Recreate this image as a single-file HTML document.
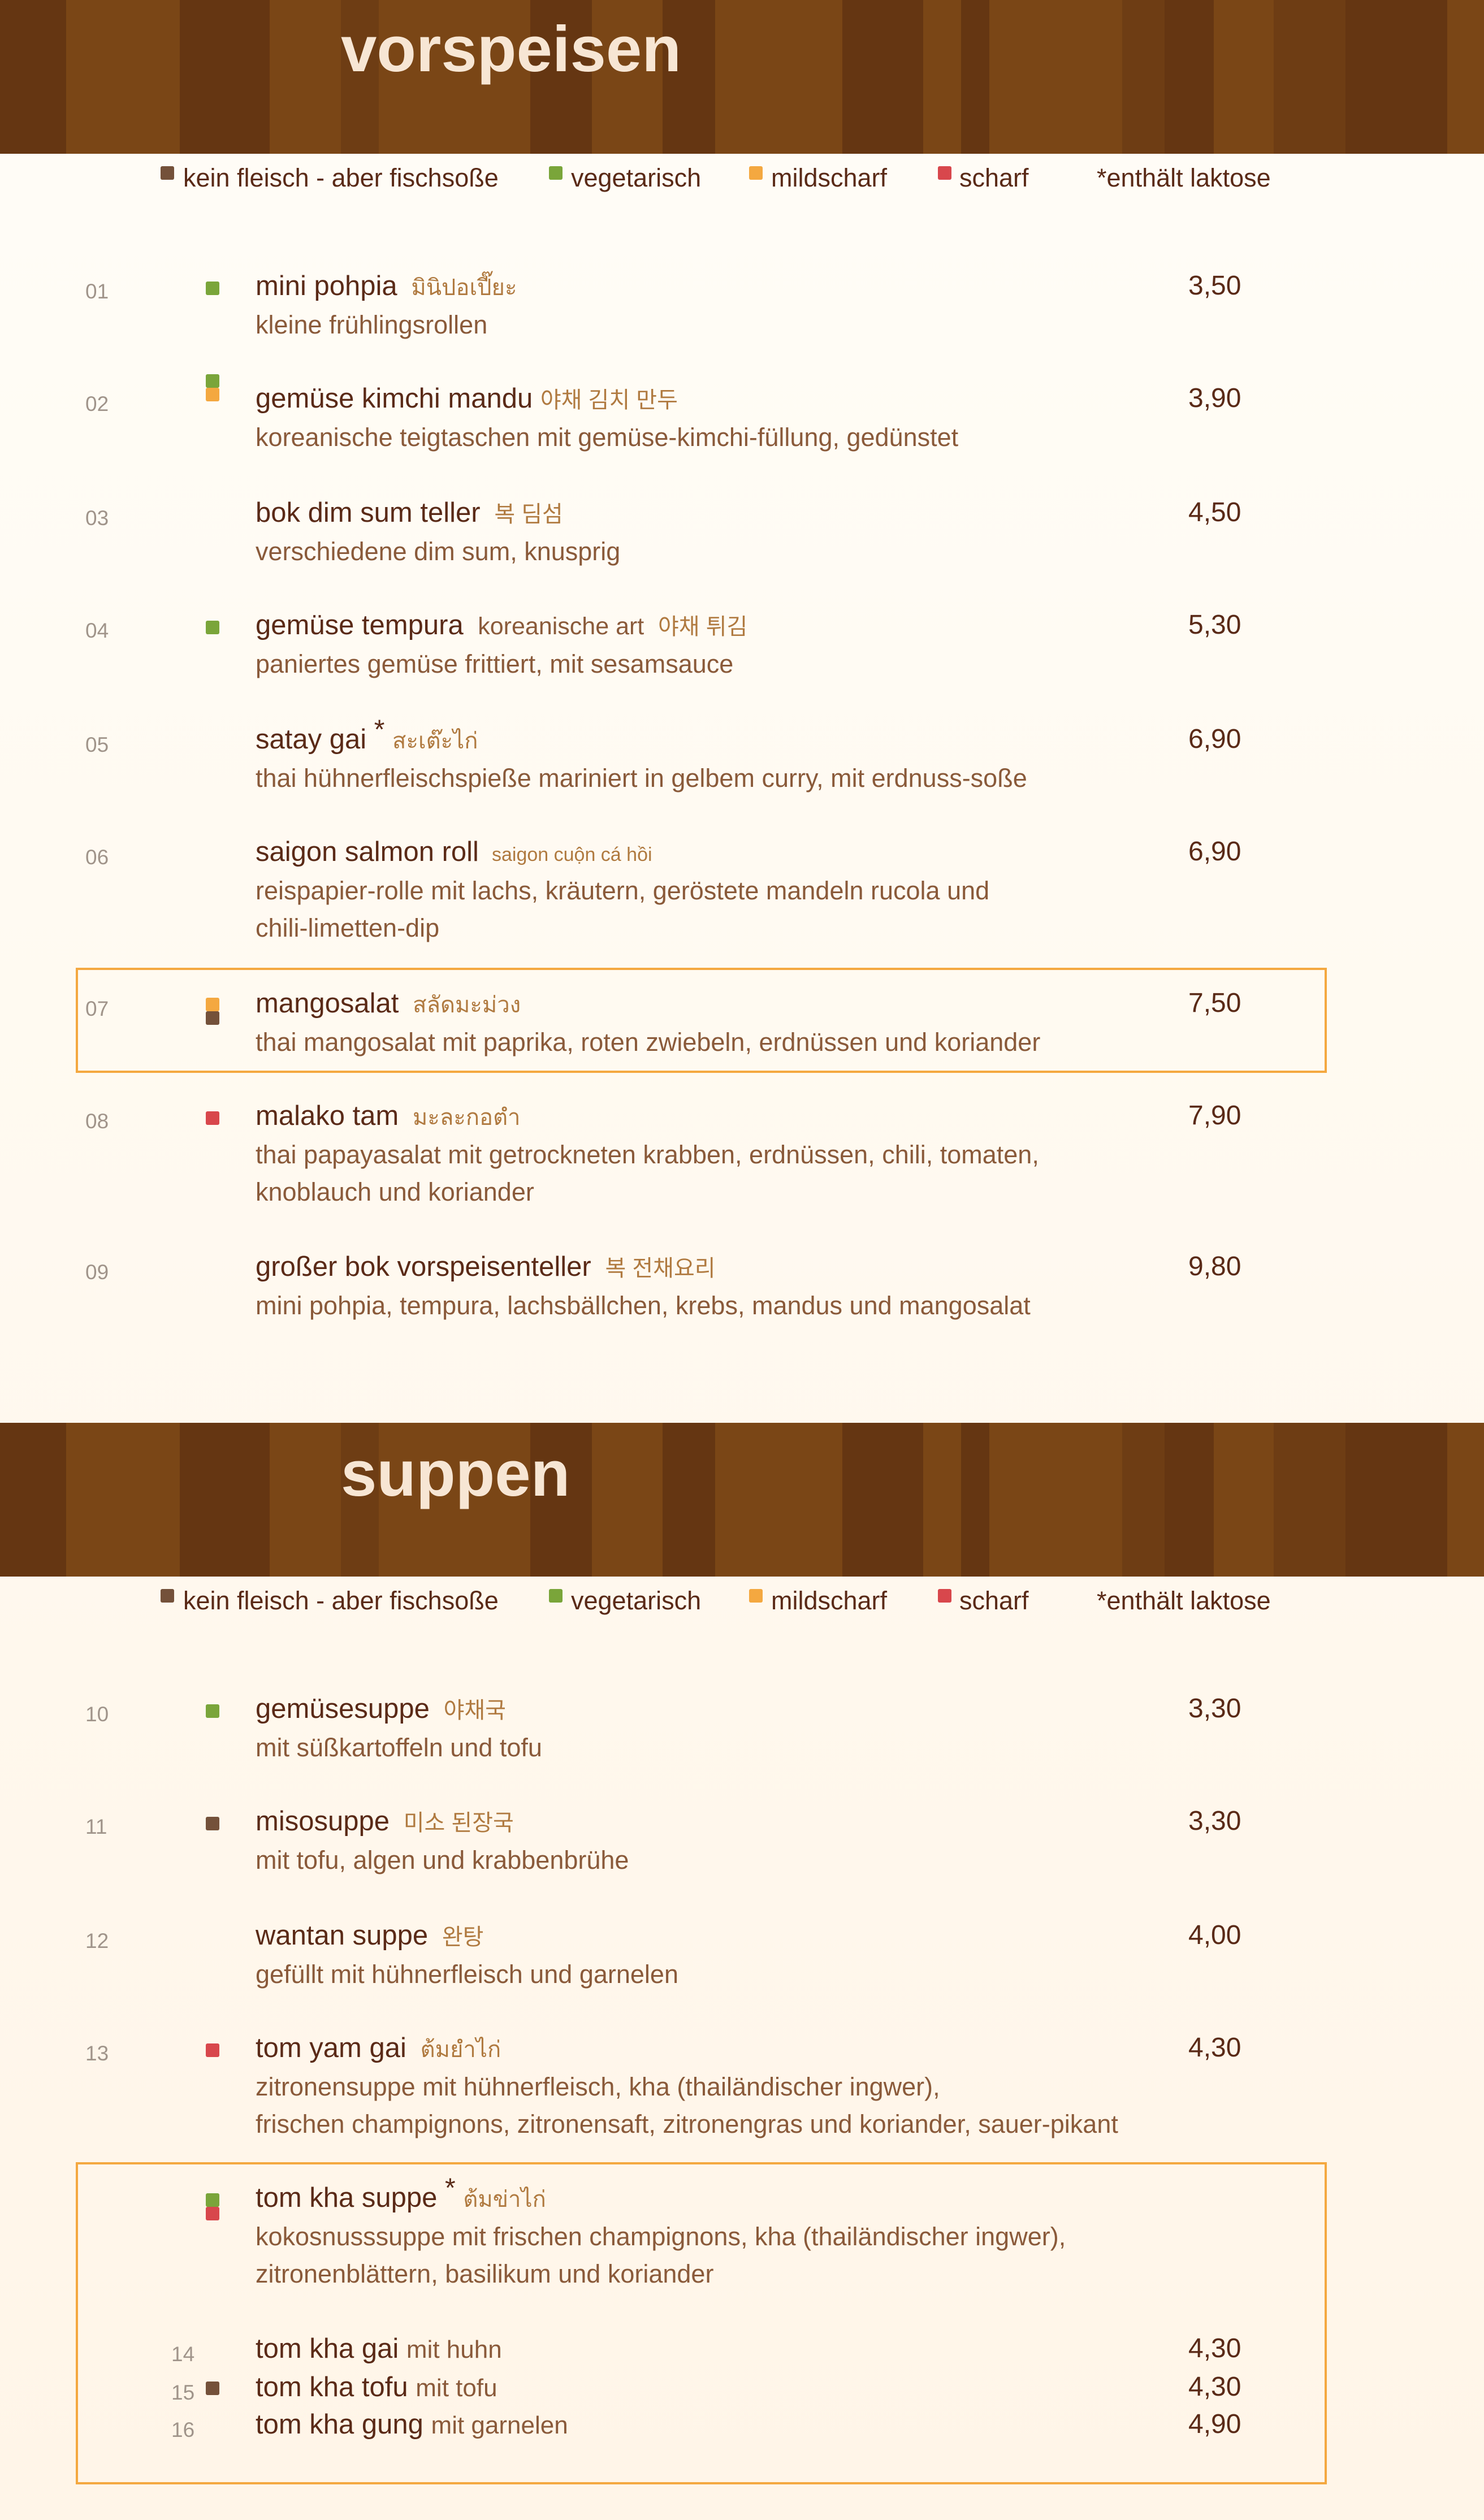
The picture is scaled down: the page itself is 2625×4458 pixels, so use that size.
<!DOCTYPE html>
<html><head><meta charset="utf-8">
<style>
*{margin:0;padding:0;box-sizing:border-box}
body{width:2625px;height:4458px;position:relative;overflow:hidden;font-family:"Liberation Sans","Noto Sans CJK KR",sans-serif;background:linear-gradient(#fffdf7,#fff5e8);}
.band{position:absolute;left:0;width:2625px;height:272px;background:linear-gradient(to right,#653612 0 117px,#7a4616 117px 318px,#653612 318px 477px,#7a4616 477px 603px,#6e3d14 603px 670px,#7a4616 670px 938px,#653612 938px 1047px,#7a4616 1047px 1172px,#653612 1172px 1265px,#7a4616 1265px 1490px,#653612 1490px 1633px,#7a4616 1633px 1700px,#653612 1700px 1750px,#7a4616 1750px 1985px,#6e3d14 1985px 2060px,#653612 2060px 2147px,#7a4616 2147px 2253px,#6e3d14 2253px 2380px,#653612 2380px 2560px,#7a4616 2560px);}
.title{position:absolute;left:603px;font-size:114px;font-weight:bold;color:#f7e6d4;line-height:114px}
.abs{position:absolute;white-space:nowrap;line-height:1}
.leg{font-size:45px;color:#5a2a17;margin-top:14px}
.lak{margin-top:22px}
.sq{position:absolute;width:24px;height:24px;border-radius:3px}
.b{background:#74513a}.g{background:#7aa53a}.o{background:#f4a840}.rd{background:#d8474c}
.num{font-size:37px;color:#a0948a;margin-top:17px}
.nm{font-size:49px;color:#5a2a17;margin-top:17px}
.fx{font-size:40px;color:#b07a40}
.ds{font-size:45px;color:#8a5a3a;margin-top:17px}
.nm .ds{margin-top:0;font-size:44px}
.pr{font-size:48px;color:#5a2a17;margin-top:17px}
.box{position:absolute;border:4px solid #f4a840}
</style></head><body>

<div class="band" style="top:0"></div>
<div class="title" style="top:31px">vorspeisen</div>
<div class="band" style="top:2517px"></div>
<div class="title" style="top:2551px">suppen</div>

<!-- legends -->
<div class="sq b" style="left:284px;top:294px"></div><div class="abs leg" style="left:324px;top:278px">kein fleisch - aber fischsoße</div>
<div class="sq g" style="left:971px;top:294px"></div><div class="abs leg" style="left:1010px;top:278px">vegetarisch</div>
<div class="sq o" style="left:1325px;top:294px"></div><div class="abs leg" style="left:1364px;top:278px">mildscharf</div>
<div class="sq rd" style="left:1659px;top:294px"></div><div class="abs leg" style="left:1697px;top:278px">scharf</div>
<div class="abs leg lak" style="left:1940px;top:270px">*enthält laktose</div>

<div class="sq b" style="left:284px;top:2811px"></div><div class="abs leg" style="left:324px;top:2795px">kein fleisch - aber fischsoße</div>
<div class="sq g" style="left:971px;top:2811px"></div><div class="abs leg" style="left:1010px;top:2795px">vegetarisch</div>
<div class="sq o" style="left:1325px;top:2811px"></div><div class="abs leg" style="left:1364px;top:2795px">mildscharf</div>
<div class="sq rd" style="left:1659px;top:2811px"></div><div class="abs leg" style="left:1697px;top:2795px">scharf</div>
<div class="abs leg lak" style="left:1940px;top:2787px">*enthält laktose</div>

<div class="box" style="left:134px;top:1712px;width:2213px;height:186px"></div>
<div class="box" style="left:134px;top:3825px;width:2213px;height:570px"></div>

<!-- vorspeisen rows -->
<div class="abs num" style="left:151px;top:480px">01</div>
<div class="sq g" style="left:364px;top:498px"></div>
<div class="abs nm" style="left:452px;top:465px">mini pohpia <span class="fx">&nbsp;มินิปอเปี๊ยะ</span></div>
<div class="abs pr" style="left:2102px;top:465px">3,50</div>
<div class="abs ds" style="left:452px;top:535px">kleine frühlingsrollen</div>

<div class="abs num" style="left:151px;top:679px">02</div>
<div class="sq g" style="left:364px;top:662px"></div><div class="sq o" style="left:364px;top:686px"></div>
<div class="abs nm" style="left:452px;top:664px">gemüse kimchi mandu <span class="fx">야채 김치 만두</span></div>
<div class="abs pr" style="left:2102px;top:664px">3,90</div>
<div class="abs ds" style="left:452px;top:734px">koreanische teigtaschen mit gemüse-kimchi-füllung, gedünstet</div>

<div class="abs num" style="left:151px;top:881px">03</div>
<div class="abs nm" style="left:452px;top:866px">bok dim sum teller <span class="fx">&nbsp;복 딤섬</span></div>
<div class="abs pr" style="left:2102px;top:866px">4,50</div>
<div class="abs ds" style="left:452px;top:936px">verschiedene dim sum, knusprig</div>

<div class="abs num" style="left:151px;top:1080px">04</div>
<div class="sq g" style="left:364px;top:1098px"></div>
<div class="abs nm" style="left:452px;top:1065px">gemüse tempura <span class="fx" style="color:#8a5a3a;font-size:43px">&nbsp;koreanische art</span> <span class="fx">&nbsp;야채 튀김</span></div>
<div class="abs pr" style="left:2102px;top:1065px">5,30</div>
<div class="abs ds" style="left:452px;top:1135px">paniertes gemüse frittiert, mit sesamsauce</div>

<div class="abs num" style="left:151px;top:1282px">05</div>
<div class="abs nm" style="left:452px;top:1267px">satay gai <sup style="font-size:48px;line-height:0">*</sup> <span class="fx">สะเต๊ะไก่</span></div>
<div class="abs pr" style="left:2102px;top:1267px">6,90</div>
<div class="abs ds" style="left:452px;top:1337px">thai hühnerfleischspieße mariniert in gelbem curry, mit erdnuss-soße</div>

<div class="abs num" style="left:151px;top:1481px">06</div>
<div class="abs nm" style="left:452px;top:1466px">saigon salmon roll <span class="fx" style="font-size:34px">&nbsp;saigon cuộn cá hồi</span></div>
<div class="abs pr" style="left:2102px;top:1466px">6,90</div>
<div class="abs ds" style="left:452px;top:1536px">reispapier-rolle mit lachs, kräutern, geröstete mandeln rucola und</div>
<div class="abs ds" style="left:452px;top:1602px">chili-limetten-dip</div>

<div class="abs num" style="left:151px;top:1749px">07</div>
<div class="sq o" style="left:364px;top:1765px"></div><div class="sq b" style="left:364px;top:1789px"></div>
<div class="abs nm" style="left:452px;top:1734px">mangosalat <span class="fx">&nbsp;สลัดมะม่วง</span></div>
<div class="abs pr" style="left:2102px;top:1734px">7,50</div>
<div class="abs ds" style="left:452px;top:1804px">thai mangosalat mit paprika, roten zwiebeln, erdnüssen und koriander</div>

<div class="abs num" style="left:151px;top:1948px">08</div>
<div class="sq rd" style="left:364px;top:1966px"></div>
<div class="abs nm" style="left:452px;top:1933px">malako tam <span class="fx">&nbsp;มะละกอตำ</span></div>
<div class="abs pr" style="left:2102px;top:1933px">7,90</div>
<div class="abs ds" style="left:452px;top:2003px">thai papayasalat mit getrockneten krabben, erdnüssen, chili, tomaten,</div>
<div class="abs ds" style="left:452px;top:2069px">knoblauch und koriander</div>

<div class="abs num" style="left:151px;top:2215px">09</div>
<div class="abs nm" style="left:452px;top:2200px">großer bok vorspeisenteller <span class="fx">&nbsp;복 전채요리</span></div>
<div class="abs pr" style="left:2102px;top:2200px">9,80</div>
<div class="abs ds" style="left:452px;top:2270px">mini pohpia, tempura, lachsbällchen, krebs, mandus und mangosalat</div>

<!-- suppen rows -->
<div class="abs num" style="left:151px;top:2997px">10</div>
<div class="sq g" style="left:364px;top:3015px"></div>
<div class="abs nm" style="left:452px;top:2982px">gemüsesuppe <span class="fx">&nbsp;야채국</span></div>
<div class="abs pr" style="left:2102px;top:2982px">3,30</div>
<div class="abs ds" style="left:452px;top:3052px">mit süßkartoffeln und tofu</div>

<div class="abs num" style="left:151px;top:3196px">11</div>
<div class="sq b" style="left:364px;top:3214px"></div>
<div class="abs nm" style="left:452px;top:3181px">misosuppe <span class="fx">&nbsp;미소 된장국</span></div>
<div class="abs pr" style="left:2102px;top:3181px">3,30</div>
<div class="abs ds" style="left:452px;top:3251px">mit tofu, algen und krabbenbrühe</div>

<div class="abs num" style="left:151px;top:3398px">12</div>
<div class="abs nm" style="left:452px;top:3383px">wantan suppe <span class="fx">&nbsp;완탕</span></div>
<div class="abs pr" style="left:2102px;top:3383px">4,00</div>
<div class="abs ds" style="left:452px;top:3453px">gefüllt mit hühnerfleisch und garnelen</div>

<div class="abs num" style="left:151px;top:3597px">13</div>
<div class="sq rd" style="left:364px;top:3615px"></div>
<div class="abs nm" style="left:452px;top:3582px">tom yam gai <span class="fx">&nbsp;ต้มยำไก่</span></div>
<div class="abs pr" style="left:2102px;top:3582px">4,30</div>
<div class="abs ds" style="left:452px;top:3652px">zitronensuppe mit hühnerfleisch, kha (thailändischer ingwer),</div>
<div class="abs ds" style="left:452px;top:3718px">frischen champignons, zitronensaft, zitronengras und koriander, sauer-pikant</div>

<div class="sq g" style="left:364px;top:3880px"></div><div class="sq rd" style="left:364px;top:3904px"></div>
<div class="abs nm" style="left:452px;top:3847px">tom kha suppe <sup style="font-size:48px;line-height:0">*</sup> <span class="fx">ต้มข่าไก่</span></div>
<div class="abs ds" style="left:452px;top:3917px">kokosnusssuppe mit frischen champignons, kha (thailändischer ingwer),</div>
<div class="abs ds" style="left:452px;top:3983px">zitronenblättern, basilikum und koriander</div>

<div class="abs num" style="left:303px;top:4129px">14</div>
<div class="abs nm" style="left:452px;top:4114px">tom kha gai <span class="ds">mit huhn</span></div>
<div class="abs pr" style="left:2102px;top:4114px">4,30</div>
<div class="abs num" style="left:303px;top:4197px">15</div>
<div class="sq b" style="left:364px;top:4213px"></div>
<div class="abs nm" style="left:452px;top:4182px">tom kha tofu <span class="ds">mit tofu</span></div>
<div class="abs pr" style="left:2102px;top:4182px">4,30</div>
<div class="abs num" style="left:303px;top:4263px">16</div>
<div class="abs nm" style="left:452px;top:4248px">tom kha gung <span class="ds">mit garnelen</span></div>
<div class="abs pr" style="left:2102px;top:4248px">4,90</div>

</body></html>
